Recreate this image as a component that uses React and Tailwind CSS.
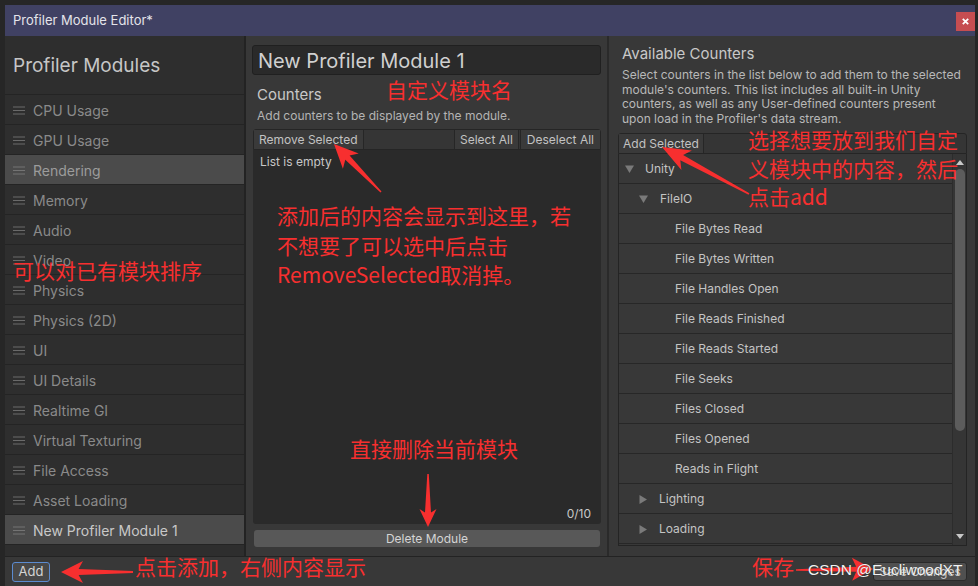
import React from "react";

const modules = [
  "CPU Usage",
  "GPU Usage",
  "Rendering",
  "Memory",
  "Audio",
  "Video",
  "Physics",
  "Physics (2D)",
  "UI",
  "UI Details",
  "Realtime GI",
  "Virtual Texturing",
  "File Access",
  "Asset Loading",
  "New Profiler Module 1",
];

const tree = [
  { label: "Unity", level: 0, tri: "down" },
  { label: "FileIO", level: 1, tri: "down" },
  { label: "File Bytes Read", level: 2 },
  { label: "File Bytes Written", level: 2 },
  { label: "File Handles Open", level: 2 },
  { label: "File Reads Finished", level: 2 },
  { label: "File Reads Started", level: 2 },
  { label: "File Seeks", level: 2 },
  { label: "Files Closed", level: 2 },
  { label: "Files Opened", level: 2 },
  { label: "Reads in Flight", level: 2 },
  { label: "Lighting", level: 1, tri: "right" },
  { label: "Loading", level: 1, tri: "right" },
  { label: "", level: 1 },
];

function Hamburger({ color = "#6a6a6a" }) {
  return (
    <svg width="12" height="9" viewBox="0 0 12 9" className="shrink-0">
      <rect x="0" y="0.5" width="12" height="1" fill={color} />
      <rect x="0" y="4" width="12" height="1" fill={color} />
      <rect x="0" y="7.5" width="12" height="1" fill={color} />
    </svg>
  );
}

function Tri({ dir }) {
  if (dir === "down")
    return (
      <svg width="9" height="8" viewBox="0 0 9 8" className="shrink-0">
        <polygon points="0,0.5 9,0.5 4.5,8" fill="#7a7a7a" />
      </svg>
    );
  return (
    <svg width="8" height="9" viewBox="0 0 8 9" className="shrink-0">
      <polygon points="0.5,0 8,4.5 0.5,9" fill="#7a7a7a" />
    </svg>
  );
}

function arrowPoints(x1, y1, x2, y2, headLen, headW, tailW, neckW) {
  const dx = x2 - x1;
  const dy = y2 - y1;
  const L = Math.hypot(dx, dy);
  const ux = dx / L;
  const uy = dy / L;
  const px = -uy;
  const py = ux;
  const bx = x2 - ux * headLen;
  const by = y2 - uy * headLen;
  const nx = x2 - ux * headLen * 0.8;
  const ny = y2 - uy * headLen * 0.8;
  const pts = [
    [x1 + (px * tailW) / 2, y1 + (py * tailW) / 2],
    [nx + (px * neckW) / 2, ny + (py * neckW) / 2],
    [bx + (px * headW) / 2, by + (py * headW) / 2],
    [x2, y2],
    [bx - (px * headW) / 2, by - (py * headW) / 2],
    [nx - (px * neckW) / 2, ny - (py * neckW) / 2],
    [x1 - (px * tailW) / 2, y1 - (py * tailW) / 2],
  ];
  return pts.map((p) => p[0].toFixed(1) + "," + p[1].toFixed(1)).join(" ");
}

const RED = "#f72f2f";

export default function App() {
  return (
    <div
      className="relative w-[978px] h-[586px] overflow-hidden bg-[#262626] pt-[5px] pl-[5px] pr-[3px]"
      style={{ fontFamily: "Inter, 'Noto Sans', sans-serif" }}
    >
      <div className="flex h-[581px] flex-col bg-[#383838]">
        {/* Title bar */}
        <div className="flex h-[31px] shrink-0 items-center justify-between bg-[#404163]">
          <span className="pl-[8px] text-[13px] text-[#e4e4ea]">Profiler Module Editor*</span>
          <div className="mt-[2px] flex h-[19px] w-[19px] items-center justify-center bg-[#c64d51]">
            <svg width="7" height="7" viewBox="0 0 7 7">
              <path d="M0.8 0.8 L6.2 6.2 M6.2 0.8 L0.8 6.2" stroke="#ffffff" strokeWidth="1.8" />
            </svg>
          </div>
        </div>

        {/* Body */}
        <div className="flex h-[520px] shrink-0">
          {/* Left panel */}
          <div className="flex w-[239px] shrink-0 flex-col bg-[#2e2e2e]">
            <div className="flex h-[59px] shrink-0 items-center border-b border-[#242424] pl-[8px] pt-[3px]">
              <span className="text-[19px] text-[#c6c6c6]">Profiler Modules</span>
            </div>
            {modules.map((m) => {
              const sel = m === "Rendering" || m === "New Profiler Module 1";
              const bright = m === "New Profiler Module 1";
              return (
                <div
                  key={m}
                  className={
                    "flex h-[30px] shrink-0 items-center gap-[8px] border-b border-[#242424] pl-[8px] pt-[1px] " +
                    (sel ? "bg-[#4b4b4b]" : "")
                  }
                >
                  <Hamburger color={sel ? "#747474" : "#6a6a6a"} />
                  <span
                    className={
                      "text-[14px] " + (bright ? "text-[#c8c8c8]" : sel ? "text-[#9c9c9c]" : "text-[#8a8a8a]")
                    }
                  >
                    {m}
                  </span>
                </div>
              );
            })}
          </div>
          <div className="w-[2px] shrink-0 bg-[#232323]" />

          {/* Middle panel */}
          <div className="flex w-[361px] shrink-0 flex-col bg-[#383838]">
            <div className="mx-[6px] mt-[9px] flex h-[30px] items-center rounded-[3px] border border-[#202020] bg-[#2a2a2a] pl-[5px] pt-[1px]">
              <span className="text-[20px] text-[#d0d0d0]">New Profiler Module 1</span>
            </div>
            <div className="ml-[11px] mt-[10px] h-[20px] text-[15px] leading-[20px] text-[#c8c8c8]">Counters</div>
            <div className="ml-[11px] mt-[3px] h-[16px] text-[12px] leading-[16px] text-[#b4b4b4]">
              Add counters to be displayed by the module.
            </div>
            <div className="ml-[7px] mr-[6px] mt-[5px] flex flex-col">
              <div className="flex h-[21px] items-stretch rounded-t-[3px] border border-[#252525] bg-[#353535]">
                <div className="flex items-center border-r border-[#262626] bg-[#3a3a3a] px-[5px] text-[12px] text-[#c2c2c2]">
                  Remove Selected
                </div>
                <div className="flex-1" />
                <div className="flex items-center border-l border-r border-[#262626] bg-[#3a3a3a] px-[5px] text-[12px] text-[#c2c2c2]">
                  Select All
                </div>
                <div className="ml-[1px] flex items-center border-l border-[#262626] bg-[#3a3a3a] px-[6px] text-[12px] text-[#c2c2c2]">
                  Deselect All
                </div>
              </div>
              <div className="relative flex h-[374px] flex-col rounded-b-[3px] bg-[#2a2a2a] pl-[7px] pt-[4px]">
                <div className="text-[12px] leading-[16px] text-[#c8c8c8]">List is empty</div>
                <div className="mt-auto mb-[2px] mr-[10px] self-end text-[12px] leading-[16px] text-[#c8c8c8]">0/10</div>
              </div>
            </div>
            <div className="ml-[8px] mr-[7px] mt-[6px] flex h-[17px] items-center justify-center rounded-[3px] bg-[#585858] text-[12px] text-[#d4d4d4]">
              Delete Module
            </div>
          </div>
          <div className="w-[2px] shrink-0 bg-[#2a2a2a]" />

          {/* Right panel */}
          <div className="flex flex-1 flex-col bg-[#383838]">
            <div className="ml-[13px] mt-[8px] h-[20px] text-[15px] leading-[20px] text-[#c8c8c8]">Available Counters</div>
            <div className="ml-[13px] mt-[4px] text-[12px] leading-[14.6px] text-[#b8b8b8]">
              <div>Select counters in the list below to add them to the selected</div>
              <div>module's counters. This list includes all built-in Unity</div>
              <div>counters, as well as any User-defined counters present</div>
              <div>upon load in the Profiler's data stream.</div>
            </div>
            <div className="ml-[9px] mr-[8px] mt-[7px] flex flex-col">
              <div className="flex h-[21px] items-stretch rounded-t-[3px] border border-[#252525] bg-[#353535]">
                <div className="flex items-center border-r border-[#262626] bg-[#3a3a3a] px-[4px] text-[12px] text-[#c2c2c2]">
                  Add Selected
                </div>
              </div>
              <div className="flex h-[392px] overflow-hidden border-x border-b border-[#242424] bg-[#383838]">
                <div className="flex flex-1 flex-col overflow-hidden">
                  {tree.map((t, i) => (
                    <div
                      key={i}
                      className="flex h-[30px] shrink-0 items-center border-b border-[#272727] pt-[1px] text-[12px] text-[#c4c4c4]"
                      style={{ paddingLeft: t.level === 0 ? 6 : t.level === 1 ? 20 : 56 }}
                    >
                      {t.tri ? <Tri dir={t.tri} /> : null}
                      <span style={{ marginLeft: t.tri ? (t.level === 0 ? 11 : 12) : 0 }}>{t.label}</span>
                    </div>
                  ))}
                </div>
                <div className="flex w-[14px] shrink-0 flex-col items-center border-l border-[#2c2c2c] bg-[#353535]">
                  <svg width="8" height="6" viewBox="0 0 8 6" className="mt-[6px]">
                    <polygon points="0,5 8,5 4,0" fill="#c8c8c8" />
                  </svg>
                  <div className="mt-[3px] h-[262px] w-[10px] rounded-full bg-[#5c5c5c]" />
                  <div className="flex-1" />
                  <svg width="8" height="6" viewBox="0 0 8 6" className="mb-[5px]">
                    <polygon points="0,0 8,0 4,5" fill="#c8c8c8" />
                  </svg>
                </div>
              </div>
            </div>
          </div>
        </div>

        {/* Bottom bar */}
        <div className="flex h-[30px] shrink-0 items-center justify-between border-t border-[#232323] bg-[#383838]">
          <div className="ml-[7px] flex h-[20px] w-[38px] items-center justify-center rounded-[3px] border border-[#5b8bd0] bg-[#484848] text-[13px] text-[#d4d4d4]">
            Add
          </div>
          <div className="mr-[8px] flex h-[19px] w-[94px] items-center justify-center rounded-[3px] border border-[#2a2a2a] bg-[#505050] text-[12px] text-[#c8c8c8]">
            Save Changes
          </div>
        </div>
      </div>

      {/* Annotations overlay */}
      <svg className="pointer-events-none absolute left-0 top-0" width="978" height="586" viewBox="0 0 978 586">
        <polygon points={arrowPoints(381, 192, 334, 144, 24, 22, 1.5, 6)} fill={RED} />
        <polygon points={arrowPoints(749, 194, 662, 147, 28, 22, 1.5, 6)} fill={RED} />
        <polygon points={arrowPoints(428, 474, 428, 527, 18, 17, 1.5, 6)} fill={RED} />
        <polygon points={arrowPoints(133, 572, 61, 572, 22, 22, 2, 6)} fill={RED} />
        <polygon points={arrowPoints(796, 570, 873, 569, 21, 23, 1.5, 5)} fill={RED} />
      </svg>

      <div
        className="pointer-events-none absolute inset-0 text-[21px]"
        style={{ fontFamily: "'Noto Sans CJK SC', 'Noto Sans', sans-serif", color: RED }}
      >
        <div className="absolute left-[386px] top-[79px] leading-[21px] whitespace-nowrap">自定义模块名</div>
        <div className="absolute left-[277px] top-[201px] leading-[29.5px] whitespace-nowrap">
          <div>添加后的内容会显示到这里，若</div>
          <div>不想要了可以选中后点击</div>
          <div>RemoveSelected取消掉。</div>
        </div>
        <div className="absolute left-[13px] top-[260px] leading-[21px] whitespace-nowrap">可以对已有模块排序</div>
        <div className="absolute left-[350px] top-[438px] leading-[21px] whitespace-nowrap">直接删除当前模块</div>
        <div className="absolute left-[748px] top-[125px] leading-[28.5px] whitespace-nowrap">
          <div>选择想要放到我们自定</div>
          <div>义模块中的内容，然后</div>
          <div>点击add</div>
        </div>
        <div className="absolute left-[135px] top-[556px] leading-[21px] whitespace-nowrap">点击添加，右侧内容显示</div>
        <div className="absolute left-[752px] top-[556px] leading-[21px] whitespace-nowrap">保存</div>
      </div>

      {/* Watermark */}
      <div
        className="pointer-events-none absolute left-[808px] top-[560px] whitespace-nowrap text-[15.5px] leading-[20px] text-[#f2f2f2]"
        style={{ fontFamily: "'Liberation Sans', Arial, sans-serif", textShadow: "0 0 1px rgba(0,0,0,0.4)" }}
      >
        CSDN @EucliwoodXT
      </div>
    </div>
  );
}
